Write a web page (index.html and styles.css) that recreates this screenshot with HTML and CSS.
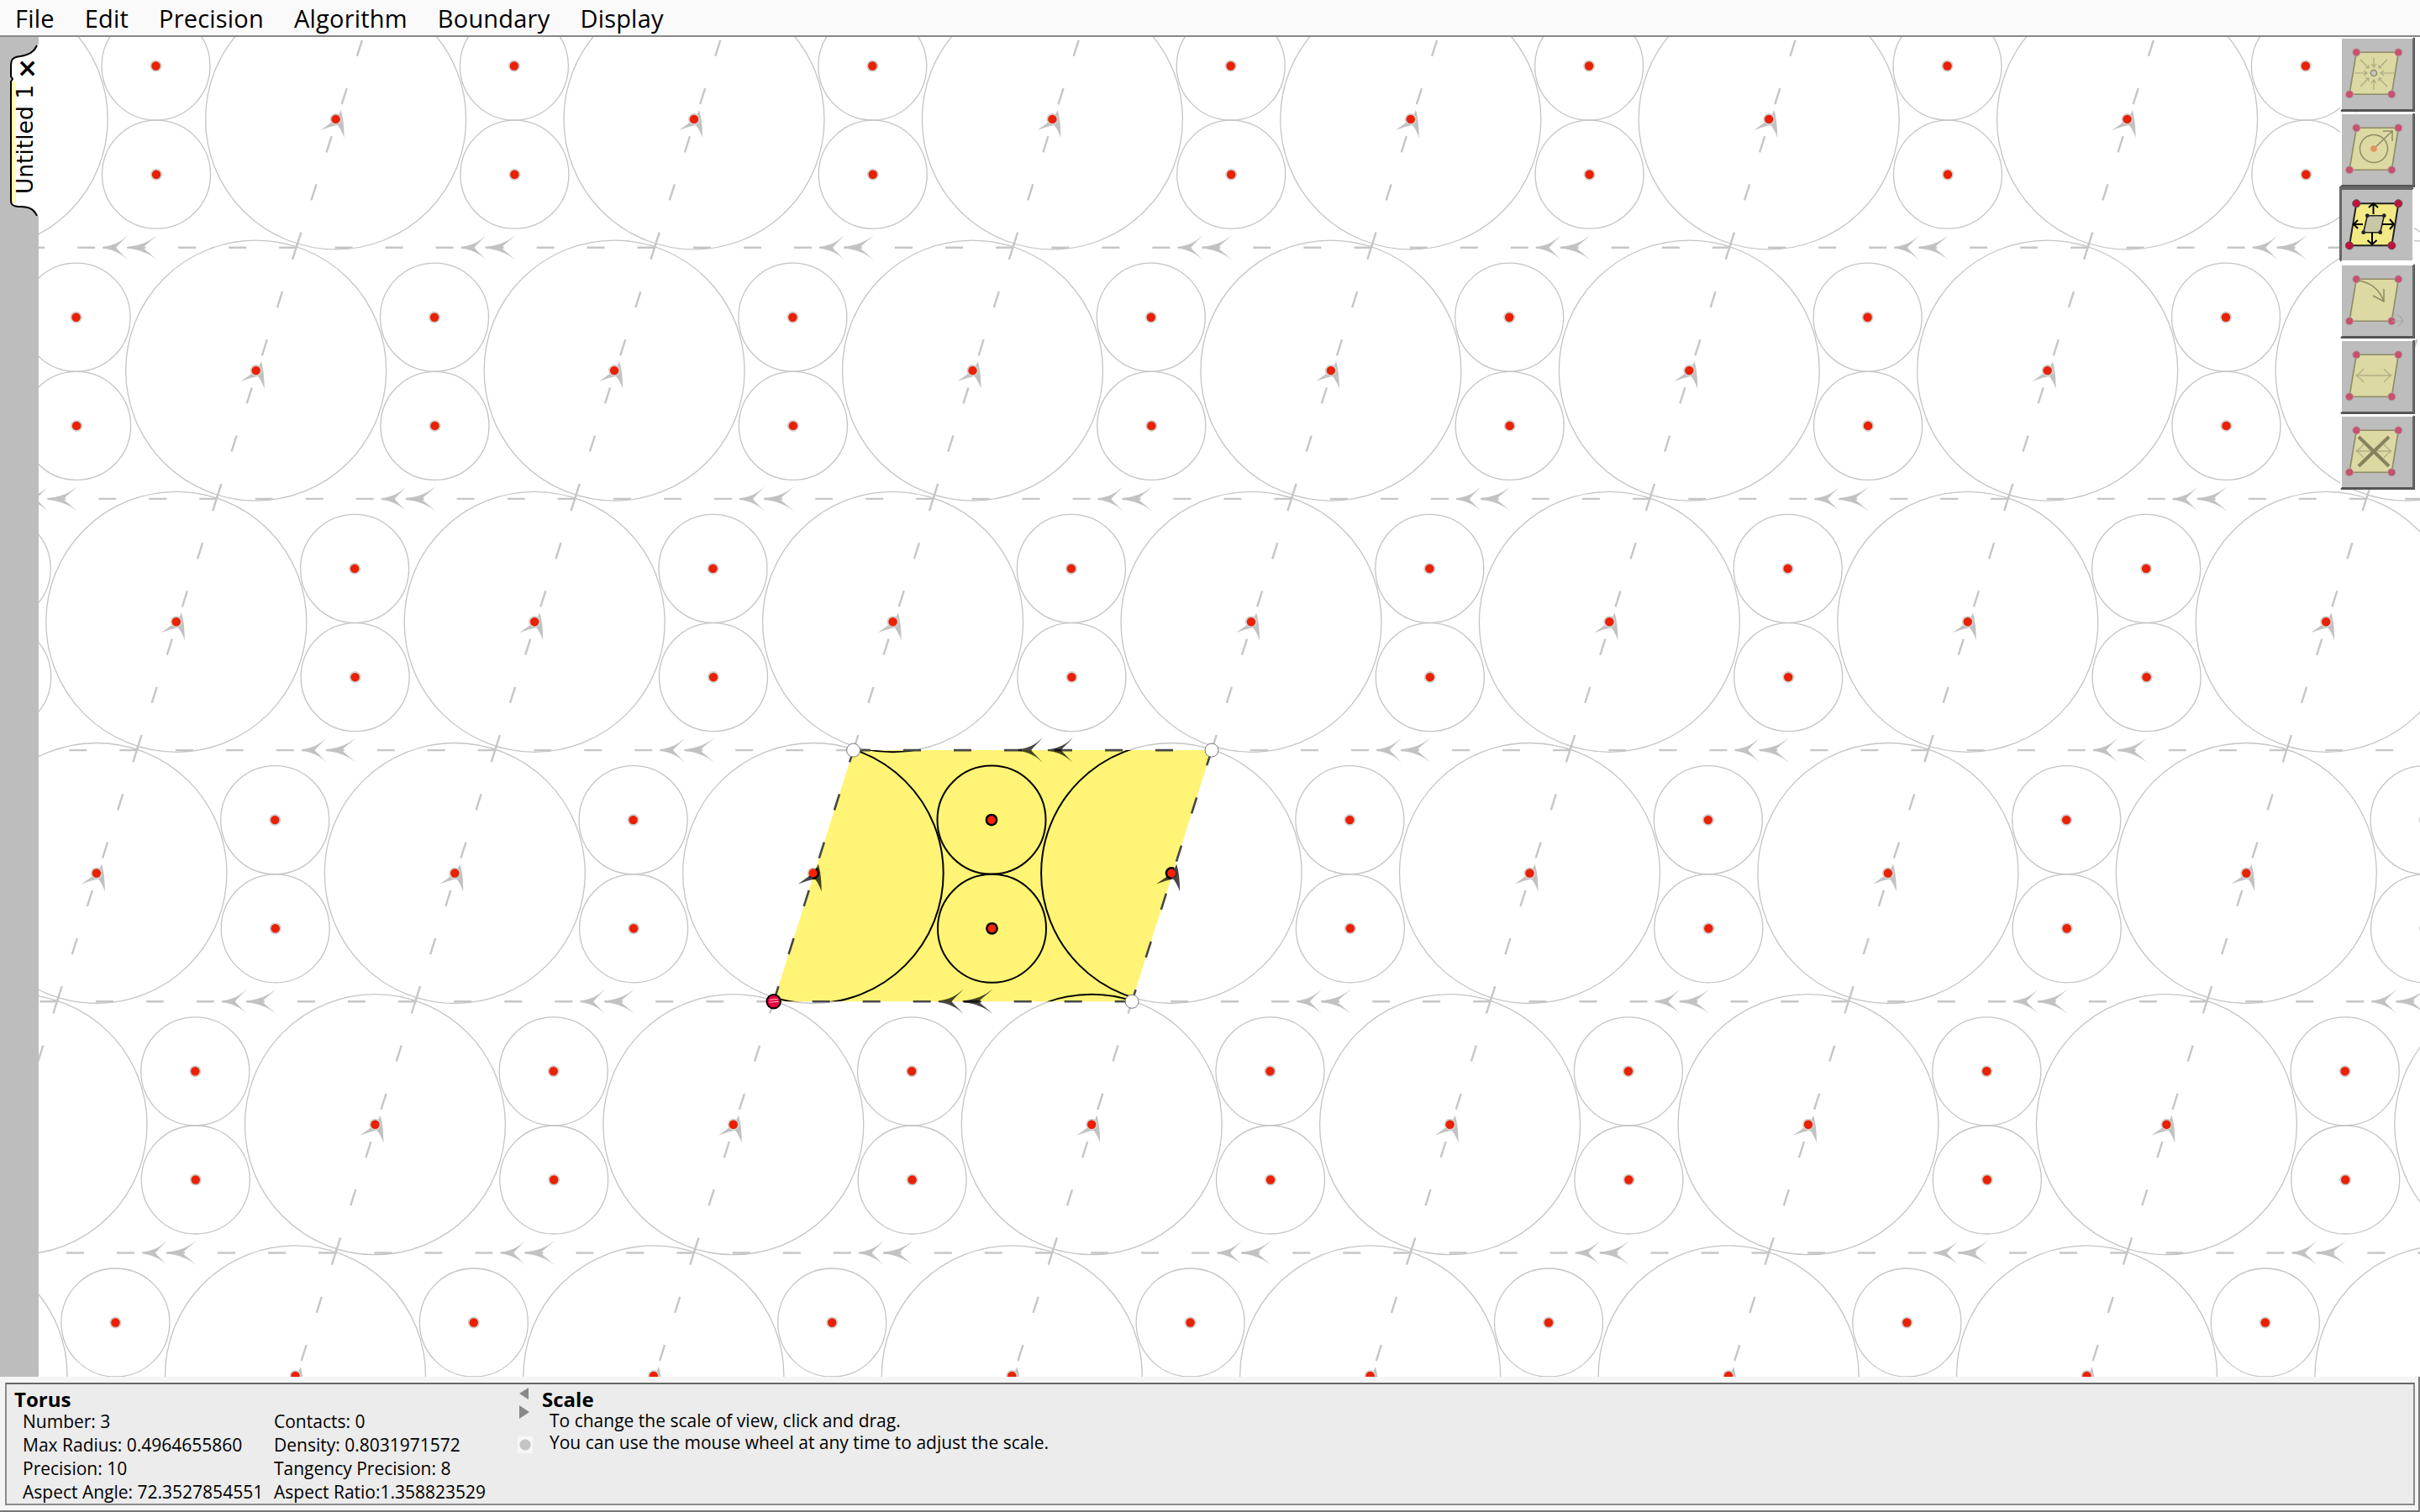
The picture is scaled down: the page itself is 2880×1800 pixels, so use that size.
FILE: index.html
```html
<!DOCTYPE html>
<html lang="en">
<head>
  <meta charset="UTF-8">
  <title>Torus</title>
  <link rel="stylesheet" href="styles.css">
</head>
<body>

  <nav class="menubar">
    <span>File</span>
    <span>Edit</span>
    <span>Precision</span>
    <span>Algorithm</span>
    <span>Boundary</span>
    <span>Display</span>
  </nav>

  <main class="workspace">
    <aside class="tabstrip">
      <div class="tab">
        <svg class="tab-shape" viewBox="0 0 36 204">
          <path class="tab-fill" d="M34 1 C31 8 26 12 14 14 C4 15 3 19 3 26 L3 38 L5 41 L3 44 L3 186 C3 191 6 193 14 193 C26 193 31 197 34 204 L36 204 L36 0 L34 0 Z"/>
          <path class="tab-glow" d="M4 44 L9 44 L9 190 L4 188 Z"/>
          <path class="tab-line" d="M34 1 C31 8 26 12 14 14 C4 15 3 19 3 26 L3 38 L5 41 L3 44 L3 186 C3 191 6 193 14 193 C26 193 31 197 34 204"/>
        </svg>
        <span class="tab-close">×</span>
        <span class="tab-title">Untitled 1</span>
      </div>
    </aside>

    <div class="board">
      <svg id="lattice" class="lattice" viewBox="46 44 2834 1595"></svg>

      <div class="tools">
        <svg width="0" height="0" class="tool-defs">
          <symbol id="frame" viewBox="0 0 84 84">
            <path class="frame-fill" d="M17.3 16.3 H67.3 L59.3 66.3 H9 Z"/>
            <circle class="frame-dot" cx="17.3" cy="16.3" r="4.6"/>
            <circle class="frame-dot" cx="67.3" cy="16.3" r="4.6"/>
            <circle class="frame-dot" cx="9" cy="66.3" r="4.6"/>
            <circle class="frame-dot" cx="59.3" cy="66.3" r="4.6"/>
          </symbol>
          <symbol id="flip" viewBox="0 0 84 84">
            <path d="M17 41 H59 M26 33 Q22 38 17 41 Q22 44 26 49 M50 33 Q54 38 59 41 Q54 44 50 49"/>
          </symbol>
        </svg>

        <button class="tool">
          <svg viewBox="0 0 84 84">
            <use href="#frame"/>
            <path class="faint" d="M38 22 V34 M35 30 L38 34 L41 30 M38 61 V49 M35 53 L38 49 L41 53 M15 41 H30 M26 38 L30 41 L26 44 M62 41 H46 M50 38 L46 41 L50 44 M22 25 L32 35 M28 35 H32 V31 M54 25 L44 35 M48 35 H44 V31 M22 57 L32 47 M28 47 H32 V51 M54 57 L44 47 M48 47 H44 V51"/>
            <circle class="hub" cx="38" cy="41" r="3.6"/>
          </svg>
        </button>

        <button class="tool">
          <svg viewBox="0 0 84 84">
            <use href="#frame"/>
            <circle class="line" cx="38" cy="41" r="16.5"/>
            <path class="line" d="M38 41 L60 20 M49 20 H60 V32"/>
            <circle class="target" cx="38" cy="41" r="3.8"/>
          </svg>
        </button>

        <button class="tool tool-on">
          <svg viewBox="0 0 84 84">
            <path class="active-fill" d="M17.3 16.3 H67.3 L59.3 66.3 H9 Z"/>
            <path class="active-inner" d="M30.3 30.7 H50.3 L45.7 50.7 H25.7 Z"/>
            <path class="active-arrows" d="M37.5 29 V16 M32 21 L37.5 16 L43 21 M36 51 V65 M30.5 60 L36 65 L41.5 60 M25 41 H14 M19 36 L14 41 L19 46 M48 41 H62 M57 35 L62 41 L57 47"/>
            <circle class="active-knob" cx="30.3" cy="30.7" r="2.4"/>
            <circle class="active-knob" cx="50.3" cy="30.7" r="2.4"/>
            <circle class="active-knob" cx="25.7" cy="50.7" r="2.4"/>
            <circle class="active-knob" cx="45.7" cy="50.7" r="2.4"/>
            <circle class="active-dot" cx="17.3" cy="16.3" r="4.6"/>
            <circle class="active-dot" cx="67.3" cy="16.3" r="4.6"/>
            <circle class="active-dot" cx="9" cy="66.3" r="4.6"/>
            <circle class="active-dot" cx="59.3" cy="66.3" r="4.6"/>
          </svg>
        </button>

        <button class="tool">
          <svg viewBox="0 0 84 84">
            <use href="#frame"/>
            <path class="line" d="M19 18 Q42 21 50 43 M37 36 L50 43 L50 28"/>
            <path class="pale" d="M60 66 H72 M66 58 Q71 62 73 66 Q71 70 66 73"/>
          </svg>
        </button>

        <button class="tool">
          <svg viewBox="0 0 84 84">
            <use href="#frame"/>
            <use class="flip" href="#flip"/>
          </svg>
        </button>

        <button class="tool">
          <svg viewBox="0 0 84 84">
            <use href="#frame"/>
            <use class="flip" href="#flip"/>
            <path class="cross" d="M20 24 L56 59 M56 24 L20 59"/>
          </svg>
        </button>
      </div>
    </div>
  </main>

  <footer class="statusbar">
    <div class="info">
      <section class="stats">
        <h2>Torus</h2>
        <div class="stats-grid">
          <span>Number: 3</span><span>Contacts: 0</span>
          <span>Max Radius: 0.4964655860</span><span>Density: 0.8031971572</span>
          <span>Precision: 10</span><span>Tangency Precision: 8</span>
          <span>Aspect Angle: 72.3527854551</span><span>Aspect Ratio:1.358823529</span>
        </div>
      </section>
      <div class="pager">
        <i class="tri tri-left"></i>
        <i class="tri tri-right"></i>
        <i class="radio"></i>
      </div>
      <section class="help">
        <h2>Scale</h2>
        <p>To change the scale of view, click and drag.</p>
        <p>You can use the mouse wheel at any time to adjust the scale.</p>
      </section>
    </div>
  </footer>

  <script src="script.js"></script>
</body>
</html>
```

FILE: styles.css
```css
html, body {
  margin: 0;
  height: 100%;
}

body {
  display: flex;
  flex-direction: column;
  height: 100vh;
  overflow: hidden;
  background: #fff;
  color: #000;
  font-family: "Open Sans", "Noto Sans", sans-serif;
}

.menubar {
  display: flex;
  flex: 0 0 44px;
  box-sizing: border-box;
  gap: 36px;
  align-items: center;
  padding: 0 0 0 18px;
  background: #fafafa;
  border-bottom: 2px solid #888;
  font-size: 29px;
  letter-spacing: 0.2px;
}

.workspace {
  display: flex;
  flex: 1;
  min-height: 0;
}

.tabstrip {
  position: relative;
  flex: 0 0 46px;
  background: #bdbdbd;
}

.tab {
  position: absolute;
  top: 9px;
  left: 10px;
  width: 36px;
  height: 204px;
}

.tab-shape {
  position: absolute;
  inset: 0;
  width: 36px;
  height: 204px;
}

.tab-fill { fill: #fff; }
.tab-glow { fill: #fffdb0; }
.tab-line { fill: none; stroke: #000; stroke-width: 2; }

.tab-close {
  position: absolute;
  top: 13px;
  left: 10px;
  width: 20px;
  text-align: center;
  font: bold 30px/30px "DejaVu Sans", sans-serif;
}

.tab-title {
  position: absolute;
  top: 48px;
  left: 6px;
  writing-mode: vertical-rl;
  transform: rotate(180deg);
  font: 26.5px/28px "DejaVu Sans", sans-serif;
  white-space: nowrap;
}

.board {
  position: relative;
  flex: 1;
  min-width: 0;
  overflow: hidden;
}

.lattice {
  display: block;
  width: 100%;
  height: 100%;
}

/* lattice pieces */
.ring { fill: none; stroke: #c4c4c4; stroke-width: 1.3; }
.edge { fill: none; stroke: #c6c6c6; stroke-width: 2.4; }
.head { fill: #c2c2c2; }
.halo { fill: #d0d0d0; }
.core { fill: #ea2000; }
.cell { fill: #fff475; }
.ring-on { fill: none; stroke: #000; stroke-width: 2; }
.edge-on { fill: none; stroke: #474747; stroke-width: 2.6; }
.head-on { fill: rgba(0, 0, 0, 0.72); }
.dot-on { fill: #000; }
.core-on { fill: #ff2200; }
.vertex { fill: #fff; stroke: #777; stroke-width: 1; }
.vertex-first { fill: #e8003c; stroke: #000; stroke-width: 2; }
.scribble { fill: none; stroke: #f6c8d4; stroke-width: 1; }

.tools {
  position: absolute;
  top: 0;
  right: 7px;
  display: flex;
  flex-direction: column;
  gap: 2px;
}

.tool-defs { position: absolute; }

.tool {
  display: block;
  width: 88px;
  height: 88px;
  padding: 0;
  background: #bdbdbd;
  border: 2px solid;
  border-color: #fff #666 #555 #fff;
  box-shadow: 1px 1px 0 #555;
}

.tool svg {
  display: block;
  width: 84px;
  height: 84px;
}

.tool-on {
  border-color: #666 #fff #fff #666;
  box-shadow: -1px -2px 0 #666;
}

.frame-fill { fill: #dcd9a2; stroke: #8d8a66; stroke-width: 1.6; }
.frame-dot { fill: #c9506e; stroke: #a8a8a8; stroke-width: 1; }
.faint { fill: none; stroke: #a9a680; stroke-width: 1.1; }
.hub { fill: #c6c6c6; stroke: #8d8a66; stroke-width: 1.5; }
.line { fill: none; stroke: #8f8c68; stroke-width: 1.5; }
.target { fill: #e89060; }
.pale { fill: none; stroke: #a8a8a8; stroke-width: 1.2; }
.flip { fill: none; stroke: #b4b088; stroke-width: 1.3; }
.cross { fill: none; stroke: #85825e; stroke-width: 4; }

.active-fill { fill: #f3ea85; stroke: #222; stroke-width: 2; }
.active-inner { fill: #c8c8a8; stroke: #222; stroke-width: 1.6; }
.active-arrows { fill: none; stroke: #000; stroke-width: 2; }
.active-knob { fill: #222; }
.active-dot { fill: #c4103c; stroke: #555; stroke-width: 1; }

.statusbar {
  flex: 0 0 161px;
  box-sizing: border-box;
  padding: 7px 4px 6px 6px;
  background: #f5f5f5;
  border-right: 2px solid #777;
  border-bottom: 2px solid #777;
}

.info {
  display: flex;
  box-sizing: border-box;
  height: 146px;
  background: #ececec;
  border: 2px solid #8a8a8a;
  border-top-color: #666;
  font-size: 21px;
  line-height: 28px;
}

.info h2 {
  margin: 0;
  font-size: 24px;
  font-weight: bold;
  line-height: 25px;
}

.stats {
  box-sizing: border-box;
  flex: 0 0 608px;
  padding: 5px 0 0 9px;
}

.stats-grid {
  display: grid;
  grid-template-columns: 299px auto;
  margin-left: 10px;
  white-space: nowrap;
}

.pager {
  display: flex;
  flex: 0 0 29px;
  flex-direction: column;
  align-items: flex-start;
  padding-top: 4px;
}

.tri {
  width: 0;
  height: 0;
  border-style: solid;
}

.tri-left {
  margin-left: 2px;
  border-width: 7px 11px 7px 0;
  border-color: transparent #888 transparent transparent;
}

.tri-right {
  margin: 7px 0 0 2px;
  border-width: 8px 0 8px 12px;
  border-color: transparent transparent transparent #888;
}

.radio {
  box-sizing: border-box;
  width: 18px;
  height: 20px;
  margin-top: 21px;
  background: radial-gradient(circle at 50% 50%, #c4c4c4 0 6px, #f6f6f6 7px);
}

.help {
  padding-top: 5px;
}

.help p {
  margin: 0 0 0 9px;
  line-height: 26px;
  white-space: nowrap;
}
```

FILE: script.js
```js
// Torus packing: one cell of the lattice, repeated over the board.
const A = 426.4;
const B = [94.9, -299.2];
const ORIGIN = [920.7, 1192.3];
const UNIT = [0.3023, -0.9532];

const BIG = { x: 47, y: -152.8, r: 155 };
const SMALL = [
  { x: 259.3, y: -216.2, r: 64.5 },
  { x: 259.8, y: -87, r: 64.5 }
];
const DISCS = [BIG, ...SMALL];

function cellOrigin(i, j) {
  return [ORIGIN[0] + i * A + j * B[0], ORIGIN[1] + j * B[1]];
}

// dashes along the bottom edge; the top edge of the yellow cell runs the other way
function flatDashes(x, y, reversed) {
  let d = "";
  for (let k = 0; k < 7; k++) {
    const s = 46 + 60 * k;
    const x1 = reversed ? x + A - s : x + s;
    const x2 = reversed ? x1 - 21 : x1 + 21;
    d += `M${x1} ${y}H${x2}`;
  }
  return d;
}

function slantDashes(x, y, reversed) {
  let d = "";
  const sx = reversed ? x + B[0] : x;
  const sy = reversed ? y + B[1] : y;
  const dir = reversed ? -1 : 1;
  for (let k = 0; k < 6; k++) {
    const s = 60 * k - 1;
    const x1 = sx + dir * UNIT[0] * s;
    const y1 = sy + dir * UNIT[1] * s;
    d += `M${x1} ${y1}L${x1 + dir * UNIT[0] * 20} ${y1 + dir * UNIT[1] * 20}`;
  }
  return d;
}

function flatHead(x, y, w, cls) {
  const s = w / 30;
  const p = (a, b) => `${x + a * s} ${y + b}`;
  return `<path class="${cls}" d="M${p(0, -1)}C${p(12, -2)} ${p(22, -7)} ${p(30, -15)}` +
    `C${p(24, -8)} ${p(18, -3)} ${p(16, 0)}C${p(18, 3)} ${p(24, 8)} ${p(30, 15)}` +
    `C${p(22, 7)} ${p(12, 2)} ${p(0, 1)}Z"/>`;
}

function slantHead(x, y, cls) {
  return `<path class="${cls}" transform="translate(${x} ${y})" ` +
    `d="M6 -11C4 -2 -8 6 -18 13C-10 10 -4 8 2 7C5 10 8 16 10 22C10 10 9 -2 6 -11Z"/>`;
}

let rings = "", edges = "", heads = "", dots = "", liveRings = "";

for (let j = -3; j <= 4; j++) {
  for (let i = -6; i <= 8; i++) {
    const [x, y] = cellOrigin(i, j);
    if (x + 700 < 46 || x - 500 > 2880) continue;

    DISCS.forEach(c => {
      rings += `<circle class="ring" cx="${x + c.x}" cy="${y + c.y}" r="${c.r}"/>`;
      liveRings += `<circle class="ring-on" cx="${x + c.x}" cy="${y + c.y}" r="${c.r}"/>`;
      dots += `<circle class="halo" cx="${x + c.x}" cy="${y + c.y}" r="7"/>` +
        `<circle class="core" cx="${x + c.x}" cy="${y + c.y}" r="5.2"/>`;
    });

    // edges of the yellow cell are drawn dark further down
    const flatLive = i === 0 && (j === 0 || j === 1);
    const slantLive = j === 0 && (i === 0 || i === 1);
    if (!flatLive) {
      edges += `<path class="edge" d="${flatDashes(x, y, false)}"/>`;
      heads += flatHead(x + 196, y, 30, "head") + flatHead(x + 225, y, 36, "head");
    }
    if (!slantLive) {
      edges += `<path class="edge" d="${slantDashes(x, y, false)}"/>`;
      heads += slantHead(x + BIG.x, y + BIG.y, "head");
    }
  }
}

const [ox, oy] = ORIGIN;
const tl = [ox + B[0], oy + B[1]];
const tr = [tl[0] + A, tl[1]];
const br = [ox + A, oy];
const cellPoints = `${ox},${oy} ${tl[0]},${tl[1]} ${tr[0]},${tr[1]} ${br[0]},${br[1]}`;

const liveDots = DISCS.map(c => [ox + c.x, oy + c.y]).concat([[ox + A + BIG.x, oy + BIG.y]]);

document.getElementById("lattice").innerHTML = `
  <defs><clipPath id="cellClip"><polygon points="${cellPoints}"/></clipPath></defs>
  ${rings}${edges}${heads}
  <polygon class="cell" points="${cellPoints}"/>
  ${dots}
  <g clip-path="url(#cellClip)">${liveRings}</g>
  <path class="edge-on" d="${flatDashes(ox, oy, false)}${slantDashes(ox, oy, false)}${flatDashes(tl[0], tl[1], true)}${slantDashes(br[0], br[1], true)}"/>
  ${flatHead(ox + 196, oy, 30, "head-on")}${flatHead(ox + 225, oy, 36, "head-on")}
  ${flatHead(tl[0] + 196.3, tl[1], 29, "head-on")}${flatHead(tl[0] + 231.3, tl[1], 30, "head-on")}
  ${slantHead(ox + BIG.x, oy + BIG.y, "head-on")}${slantHead(br[0] + BIG.x, oy + BIG.y, "head-on")}
  <g clip-path="url(#cellClip)">
    ${liveDots.map(p => `<circle class="dot-on" cx="${p[0]}" cy="${p[1]}" r="7.4"/>`).join("")}
  </g>
  ${liveDots.map(p => `<circle class="core-on" cx="${p[0]}" cy="${p[1]}" r="4.9"/>`).join("")}
  <circle class="vertex" cx="${tl[0]}" cy="${tl[1]}" r="8"/>
  <circle class="vertex" cx="${tr[0]}" cy="${tr[1]}" r="8"/>
  <circle class="vertex" cx="${br[0]}" cy="${br[1]}" r="8"/>
  <circle class="vertex-first" cx="${ox}" cy="${oy}" r="8.2"/>
  <path class="scribble" d="M${ox - 5} ${oy - 2}L${ox + 5} ${oy - 3}M${ox - 5} ${oy + 1}L${ox + 6} ${oy}"/>
`;
```
